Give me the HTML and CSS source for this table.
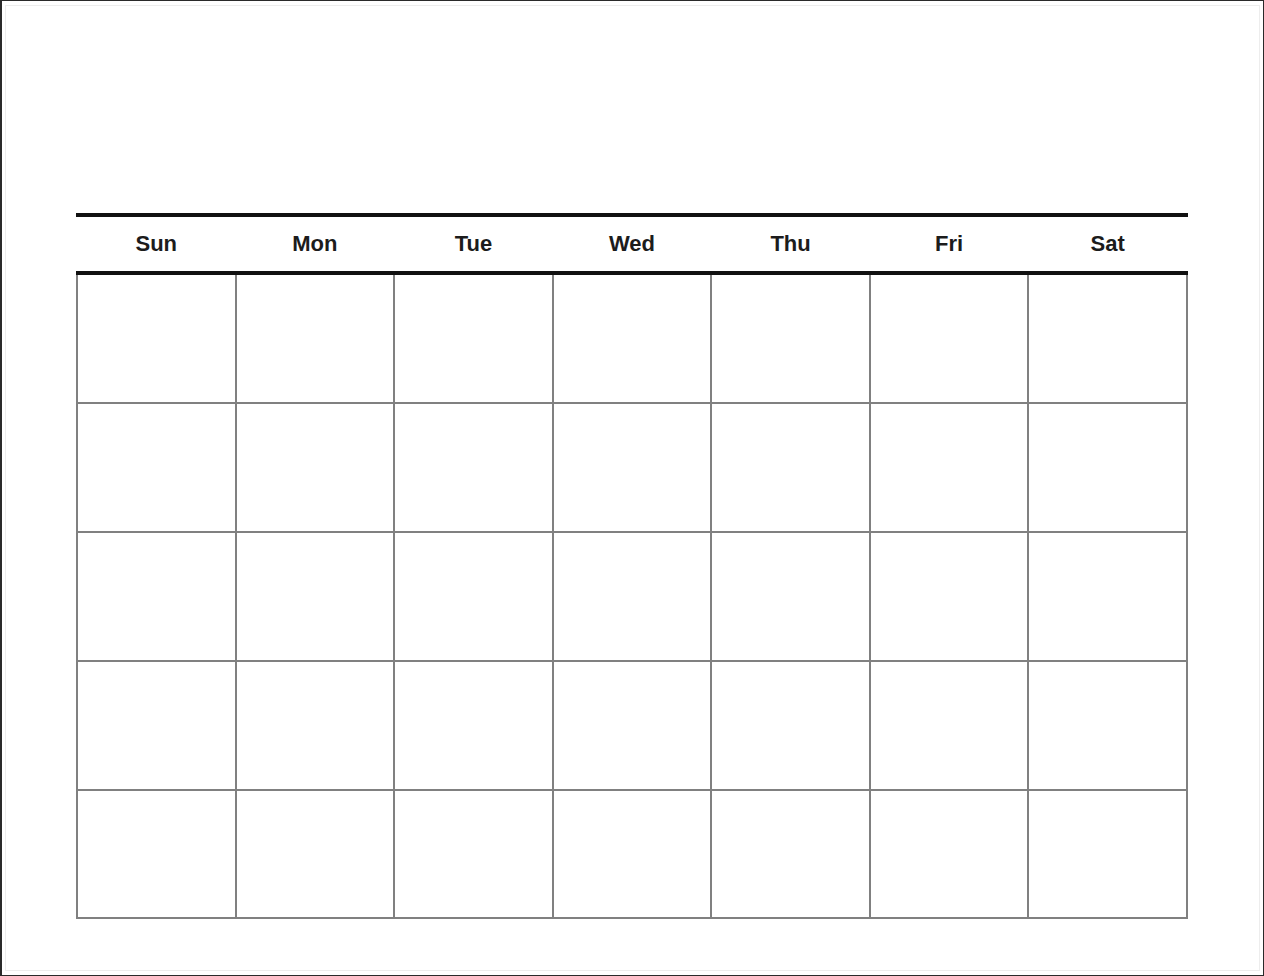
FILE: index.html
```html
<!DOCTYPE html>
<html lang="en">
<head>
<meta charset="utf-8">
<title>Blank Calendar</title>
<link rel="stylesheet" href="styles.css">
</head>
<body>
<div class="page">
  <div class="frame">
    <div class="calendar">
      <div class="head">
        <div class="day">Sun</div>
        <div class="day">Mon</div>
        <div class="day">Tue</div>
        <div class="day">Wed</div>
        <div class="day">Thu</div>
        <div class="day">Fri</div>
        <div class="day">Sat</div>
      </div>
      <div class="grid">
        <div class="cell"></div><div class="cell"></div><div class="cell"></div><div class="cell"></div><div class="cell"></div><div class="cell"></div><div class="cell"></div>
        <div class="cell"></div><div class="cell"></div><div class="cell"></div><div class="cell"></div><div class="cell"></div><div class="cell"></div><div class="cell"></div>
        <div class="cell"></div><div class="cell"></div><div class="cell"></div><div class="cell"></div><div class="cell"></div><div class="cell"></div><div class="cell"></div>
        <div class="cell"></div><div class="cell"></div><div class="cell"></div><div class="cell"></div><div class="cell"></div><div class="cell"></div><div class="cell"></div>
        <div class="cell"></div><div class="cell"></div><div class="cell"></div><div class="cell"></div><div class="cell"></div><div class="cell"></div><div class="cell"></div>
      </div>
    </div>
  </div>
</div>
</body>
</html>
```

FILE: styles.css
```css
* { box-sizing: border-box; }
html, body { margin: 0; padding: 0; background: #fff; }
body { font-family: "Liberation Sans", Arial, sans-serif; }

.page {
  width: 1264px;
  height: 976px;
  border: 1px solid #2a2a2a;
  border-left-width: 2px;
  background: #fff;
  padding: 4px 3px 4px 3px;
}

.frame {
  height: 100%;
  border: 1px solid #ededed;
  padding: 207px 0 0 70px;
}

.calendar {
  width: 1112px;
}

.head {
  display: grid;
  grid-template-columns: repeat(7, 1fr);
  border-top: 4px solid #111;
  border-bottom: 4px solid #111;
  height: 62px;
  padding-left: 2px;
}

.day {
  display: flex;
  align-items: center;
  justify-content: center;
  font-weight: bold;
  font-size: 22px;
  color: #1c1c1c;
  padding-right: 2px;
}

.grid {
  display: grid;
  grid-template-columns: repeat(7, 1fr);
  grid-template-rows: repeat(5, 128.9px);
  border-left: 2px solid #808080;
}

.cell {
  border-right: 2px solid #808080;
  border-bottom: 2px solid #808080;
}
```
